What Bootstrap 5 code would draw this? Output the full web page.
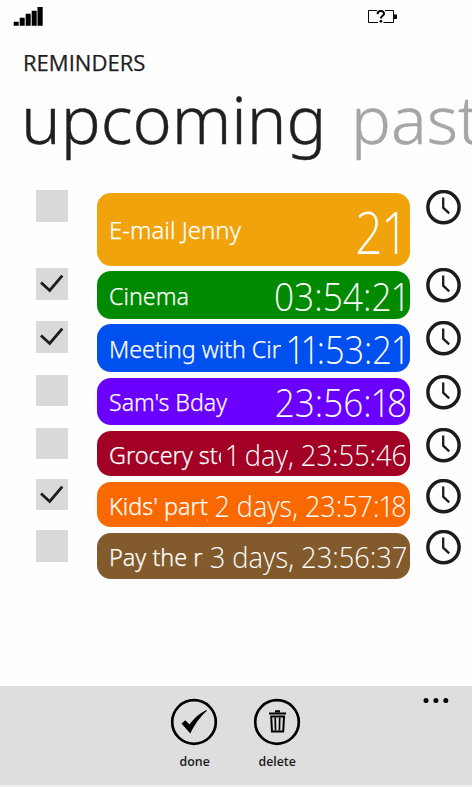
<!DOCTYPE html>
<html lang="en">
<head>
<meta charset="utf-8">
<meta name="viewport" content="width=device-width, initial-scale=1">
<title>Reminders</title>
<link href="https://cdn.jsdelivr.net/npm/bootstrap@5.3.0/dist/css/bootstrap.min.css" rel="stylesheet">
<style>
  body { font-family: "Noto Sans", "Open Sans", sans-serif; color: #1f1f1f; background: #fefefe; }
  .phone { width: 472px; height: 787px; }
  .status { height: 48px; padding: 7px 74px 0 13px; }
  .battery { margin-top: 3px; }
  .fit { display: inline-block; white-space: nowrap; transform: scaleX(var(--sx, 1)); transform-origin: left; }
  .app-title { font: 400 21px/30px "Open Sans", sans-serif; padding-left: 22.5px; height: 30px; --sx: 1.05; -webkit-text-stroke: .25px; }
  .pivots { font-size: 67px; font-weight: 300; line-height: 80px; height: 112px; padding-left: 20.5px; gap: 23px; -webkit-text-stroke: .4px; }
  .pivots .fit { --sx: .995; }
  .pivot-off { color: #a6a6a6; }
  .reminders { padding-left: 36px; height: 496px; }
  .reminder { height: 53.2px; }
  .tick { width: 32px; height: 31.5px; background: #d9d9d9; }
  .pill { width: 313px; height: 47.5px; margin: 3px 16px 0 29px; padding: 0 3px 0 12px; border-radius: 14px; color: #fff; }
  .what { font-size: 24px; font-weight: 300; line-height: 36px; height: 36px; --sx: .965; width: 172px; flex: none; padding-top: 1px; -webkit-text-stroke: .25px; }
  .when { font-family: "Open Sans", sans-serif; font-weight: 300; font-size: 39px; line-height: 46px; min-width: 0; padding-top: 1px; }
  .when .fit { transform-origin: right; }
  .when i { font-style: normal; margin: 0 -.1em 0 -.03em; }
  .tall { height: 78.3px; }
  .tall .pill { height: 73px; }
  .tall .what { padding-top: 0; }
  .tall .when { font-size: 59px; padding: 3px 3px 0 0; }
  .days { height: 51.1px; }
  .days .pill { height: 45.5px; }
  .days .what { --sx: .975; }
  .days .when { font-size: 29px; padding-top: 2px; }
  .appbar { height: 101px; background: #dedede; border-bottom: 2px solid #efefef; padding-left: 153px; color: #1a1a1a; }
  .action { width: 82.5px; padding-top: 12px; font: 600 12px/18px "Open Sans", sans-serif; }
  .action svg { margin-bottom: 7px; }
  .action .fit { transform-origin: center; --sx: 1.03; }
  .more { margin: 11px 23px 0 auto; }
</style>
<script src="https://cdn.jsdelivr.net/npm/bootstrap@5.3.0/dist/js/bootstrap.bundle.min.js"></script>
</head>
<body>
<svg class="d-none">
  <symbol id="clock" viewBox="0 0 35 35"><circle cx="17.5" cy="17.2" r="15.6" fill="none" stroke="#1c1c1c" stroke-width="3.5"/><path d="M17.2 7.500V17.700l6 5.600" fill="none" stroke="#1c1c1c" stroke-width="2.3"/></symbol>
  <symbol id="tickmark" viewBox="0 0 32 32"><path d="M5 14.500l8.700 8L26.300 7.700" fill="none" stroke="#1c1c1c" stroke-width="2.8"/></symbol>
</svg>
<div class="phone d-flex flex-column overflow-hidden">
  <div class="status d-flex justify-content-between align-items-start">
    <svg width="31" height="20"><path d="M.7 14.700h5v4h-5zM6.700 10.700h5v8h-5zM12.700 6.700h5v12h-5zM18.700 3.700h5v15h-5zM24.500 0h5.200v18.700h-5.200z"/></svg>
    <svg width="30" height="17" class="battery" viewBox="0 0 30 17"><path d="M9 .5H.5v12H10M15.500 12.500H25.500V.5H17" fill="none" stroke="#000"/><path d="M26 4.500h3v4.500h-3z"/><path d="M9.500 4.200Q9.600 1 12.900 1Q16.100 1 16 3.700Q16 5 14.300 6Q12.900 6.900 12.900 8.500" fill="none" stroke="#000" stroke-width="2"/><circle cx="12.900" cy="11.300" r="1.400"/></svg>
  </div>
  <div class="app-title"><span class="fit">REMINDERS</span></div>
  <div class="pivots d-flex text-nowrap"><span class="fit">upcoming</span><span class="fit pivot-off">past</span></div>
  <div class="reminders flex-shrink-0">
    <div class="reminder tall d-flex align-items-start">
      <div class="tick"></div>
      <div class="pill d-flex align-items-center" style="background:#f0a30a"><div class="what overflow-hidden" style="--sx:1"><span class="fit">E-mail Jenny</span></div><div class="when d-flex justify-content-end flex-fill"><span class="fit" style="--sx:.81">2<i>1</i></span></div></div>
      <svg width="35" height="35"><use href="#clock"/></svg>
    </div>
    <div class="reminder d-flex align-items-start">
      <div class="tick"><svg width="32" height="32" class="d-block"><use href="#tickmark"/></svg></div>
      <div class="pill d-flex align-items-center" style="background:#008a00"><div class="what overflow-hidden" style="--sx:.97;width:150px"><span class="fit">Cinema</span></div><div class="when d-flex justify-content-end flex-fill"><span class="fit" style="--sx:.905">03:54:2<i>1</i></span></div></div>
      <svg width="35" height="35"><use href="#clock"/></svg>
    </div>
    <div class="reminder d-flex align-items-start">
      <div class="tick"><svg width="32" height="32" class="d-block"><use href="#tickmark"/></svg></div>
      <div class="pill d-flex align-items-center" style="background:#0050ef"><div class="what overflow-hidden"><span class="fit">Meeting with Cindy</span></div><div class="when d-flex justify-content-end flex-fill"><span class="fit" style="--sx:.88"><i>1</i><i>1</i>:53:2<i>1</i></span></div></div>
      <svg width="35" height="35"><use href="#clock"/></svg>
    </div>
    <div class="reminder d-flex align-items-start">
      <div class="tick"></div>
      <div class="pill d-flex align-items-center" style="background:#6a00ff"><div class="what overflow-hidden" style="width:150px"><span class="fit">Sam's Bday</span></div><div class="when d-flex justify-content-end flex-fill"><span class="fit" style="--sx:.9">23:56:<i>1</i>8</span></div></div>
      <svg width="35" height="35"><use href="#clock"/></svg>
    </div>
    <div class="reminder days d-flex align-items-start">
      <div class="tick"></div>
      <div class="pill d-flex align-items-center" style="background:#a20025"><div class="what overflow-hidden" style="width:112px"><span class="fit">Grocery store</span></div><div class="when d-flex justify-content-end flex-fill"><span class="fit" style="--sx:.94"><i>1</i> day, 23:55:46</span></div></div>
      <svg width="35" height="35"><use href="#clock"/></svg>
    </div>
    <div class="reminder days d-flex align-items-start">
      <div class="tick"><svg width="32" height="32" class="d-block"><use href="#tickmark"/></svg></div>
      <div class="pill d-flex align-items-center" style="background:#fa6800"><div class="what overflow-hidden" style="width:99px"><span class="fit">Kids' party</span></div><div class="when d-flex justify-content-end flex-fill"><span class="fit" style="--sx:.93">2 days, 23:57:<i>1</i>8</span></div></div>
      <svg width="35" height="35"><use href="#clock"/></svg>
    </div>
    <div class="reminder days d-flex align-items-start">
      <div class="tick"></div>
      <div class="pill d-flex align-items-center" style="background:#825a2c"><div class="what overflow-hidden" style="width:94px"><span class="fit">Pay the rent</span></div><div class="when d-flex justify-content-end flex-fill"><span class="fit" style="--sx:.94">3 days, 23:56:37</span></div></div>
      <svg width="35" height="35"><use href="#clock"/></svg>
    </div>
  </div>
  <div class="appbar d-flex align-items-start flex-shrink-0">
    <div class="action d-flex flex-column align-items-center">
      <svg width="48" height="48" viewBox="0 0 48 48"><circle cx="24" cy="24" r="21.800" fill="none" stroke="#000" stroke-width="2.700"/><path d="M11.500 25.500l3.800-3.200 4.200 4.300C24 20.500 29 15.500 36.500 12l.5 .8C30 19 25 26 20.300 35.500Z"/></svg>
      <span class="fit">done</span>
    </div>
    <div class="action d-flex flex-column align-items-center">
      <svg width="48" height="48" viewBox="0 0 48 48" fill="none" stroke="#000"><circle cx="24" cy="24" r="21.800" stroke-width="2.700"/><path d="M16 15.500H33M22 13.300h5" stroke-width="2"/><path d="M18.200 18.500H31L30.200 33.500H19Z" stroke-width="2"/><path d="M22.200 19.500l.3 13M26.700 19.500l-.3 13" stroke-width="1.700"/></svg>
      <span class="fit">delete</span>
    </div>
    <svg class="more" width="26" height="7"><circle cx="3" cy="3.500" r="2.500"/><circle cx="12.900" cy="3.500" r="2.500"/><circle cx="22.800" cy="3.500" r="2.500"/></svg>
  </div>
</div>
</body>
</html>
